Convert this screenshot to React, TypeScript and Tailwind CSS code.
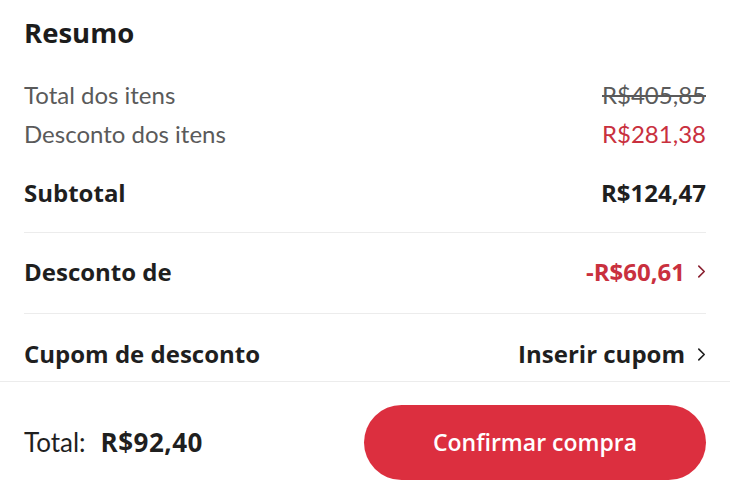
import React from "react";

const Chevron = ({ className }: { className: string }) => (
  <svg viewBox="0 0 10 16" className={className} fill="none" stroke="currentColor" strokeWidth="1.8" strokeLinecap="round" strokeLinejoin="round">
    <path d="M2 2l6 6-6 6" />
  </svg>
);

const bold = "font-['Open_Sans',sans-serif] font-bold";

export default function App() {
  return (
    <div className="w-[730px] h-[500px] bg-white flex flex-col overflow-hidden text-[#1f1f1f] font-['Lato','Noto_Sans',sans-serif]">
      <div className="px-6 flex flex-col h-[381px] overflow-hidden">
        <div className={`pt-[13px] h-[75px] text-[27.5px] leading-[40px] text-[#1c1c1c] ${bold}`}>Resumo</div>
        <div className="h-[39px] flex items-center justify-between text-[24px] text-[#5a5a5a]">
          <span>Total dos itens</span>
          <span className="line-through">R$405,85</span>
        </div>
        <div className="h-[39px] flex items-center justify-between text-[24px]">
          <span className="text-[#5a5a5a]">Desconto dos itens</span>
          <span className="text-[#c9303e]">R$281,38</span>
        </div>
        <div className={`h-[80px] shrink-0 flex items-center justify-between text-[24px] border-b border-[#ececec] ${bold}`}>
          <span>Subtotal</span>
          <span>R$124,47</span>
        </div>
        <div className={`h-[81px] shrink-0 pb-[3px] flex items-center justify-between text-[24px] border-b border-[#ececec] ${bold}`}>
          <span>Desconto de</span>
          <span className="flex items-center gap-[12px] text-[#c9303e]">
            -R$60,61
            <Chevron className="w-[9px] h-[15px] text-[#8a2030]" />
          </span>
        </div>
        <div className={`shrink-0 pt-[24px] flex items-center justify-between text-[24px] leading-[32px] ${bold}`}>
          <span>Cupom de desconto</span>
          <span className="flex items-center gap-[12px]">
            Inserir cupom
            <Chevron className="w-[9px] h-[15px] text-[#1f1f1f]" />
          </span>
        </div>
      </div>
      <div className="flex-1 border-t border-[#ececec] px-6 pt-[23px] flex items-start justify-between">
        <div className="h-[75px] flex items-center gap-[15px] text-[#1f1f1f]">
          <span className="text-[26px]">Total:</span>
          <span className={`text-[26px] tracking-[0.5px] ${bold}`}>R$92,40</span>
        </div>
        <button className="w-[342px] h-[75px] rounded-full bg-[#dc2f3f] text-white text-[23px] font-['Open_Sans',sans-serif] font-semibold flex items-center justify-center">
          Confirmar compra
        </button>
      </div>
    </div>
  );
}
